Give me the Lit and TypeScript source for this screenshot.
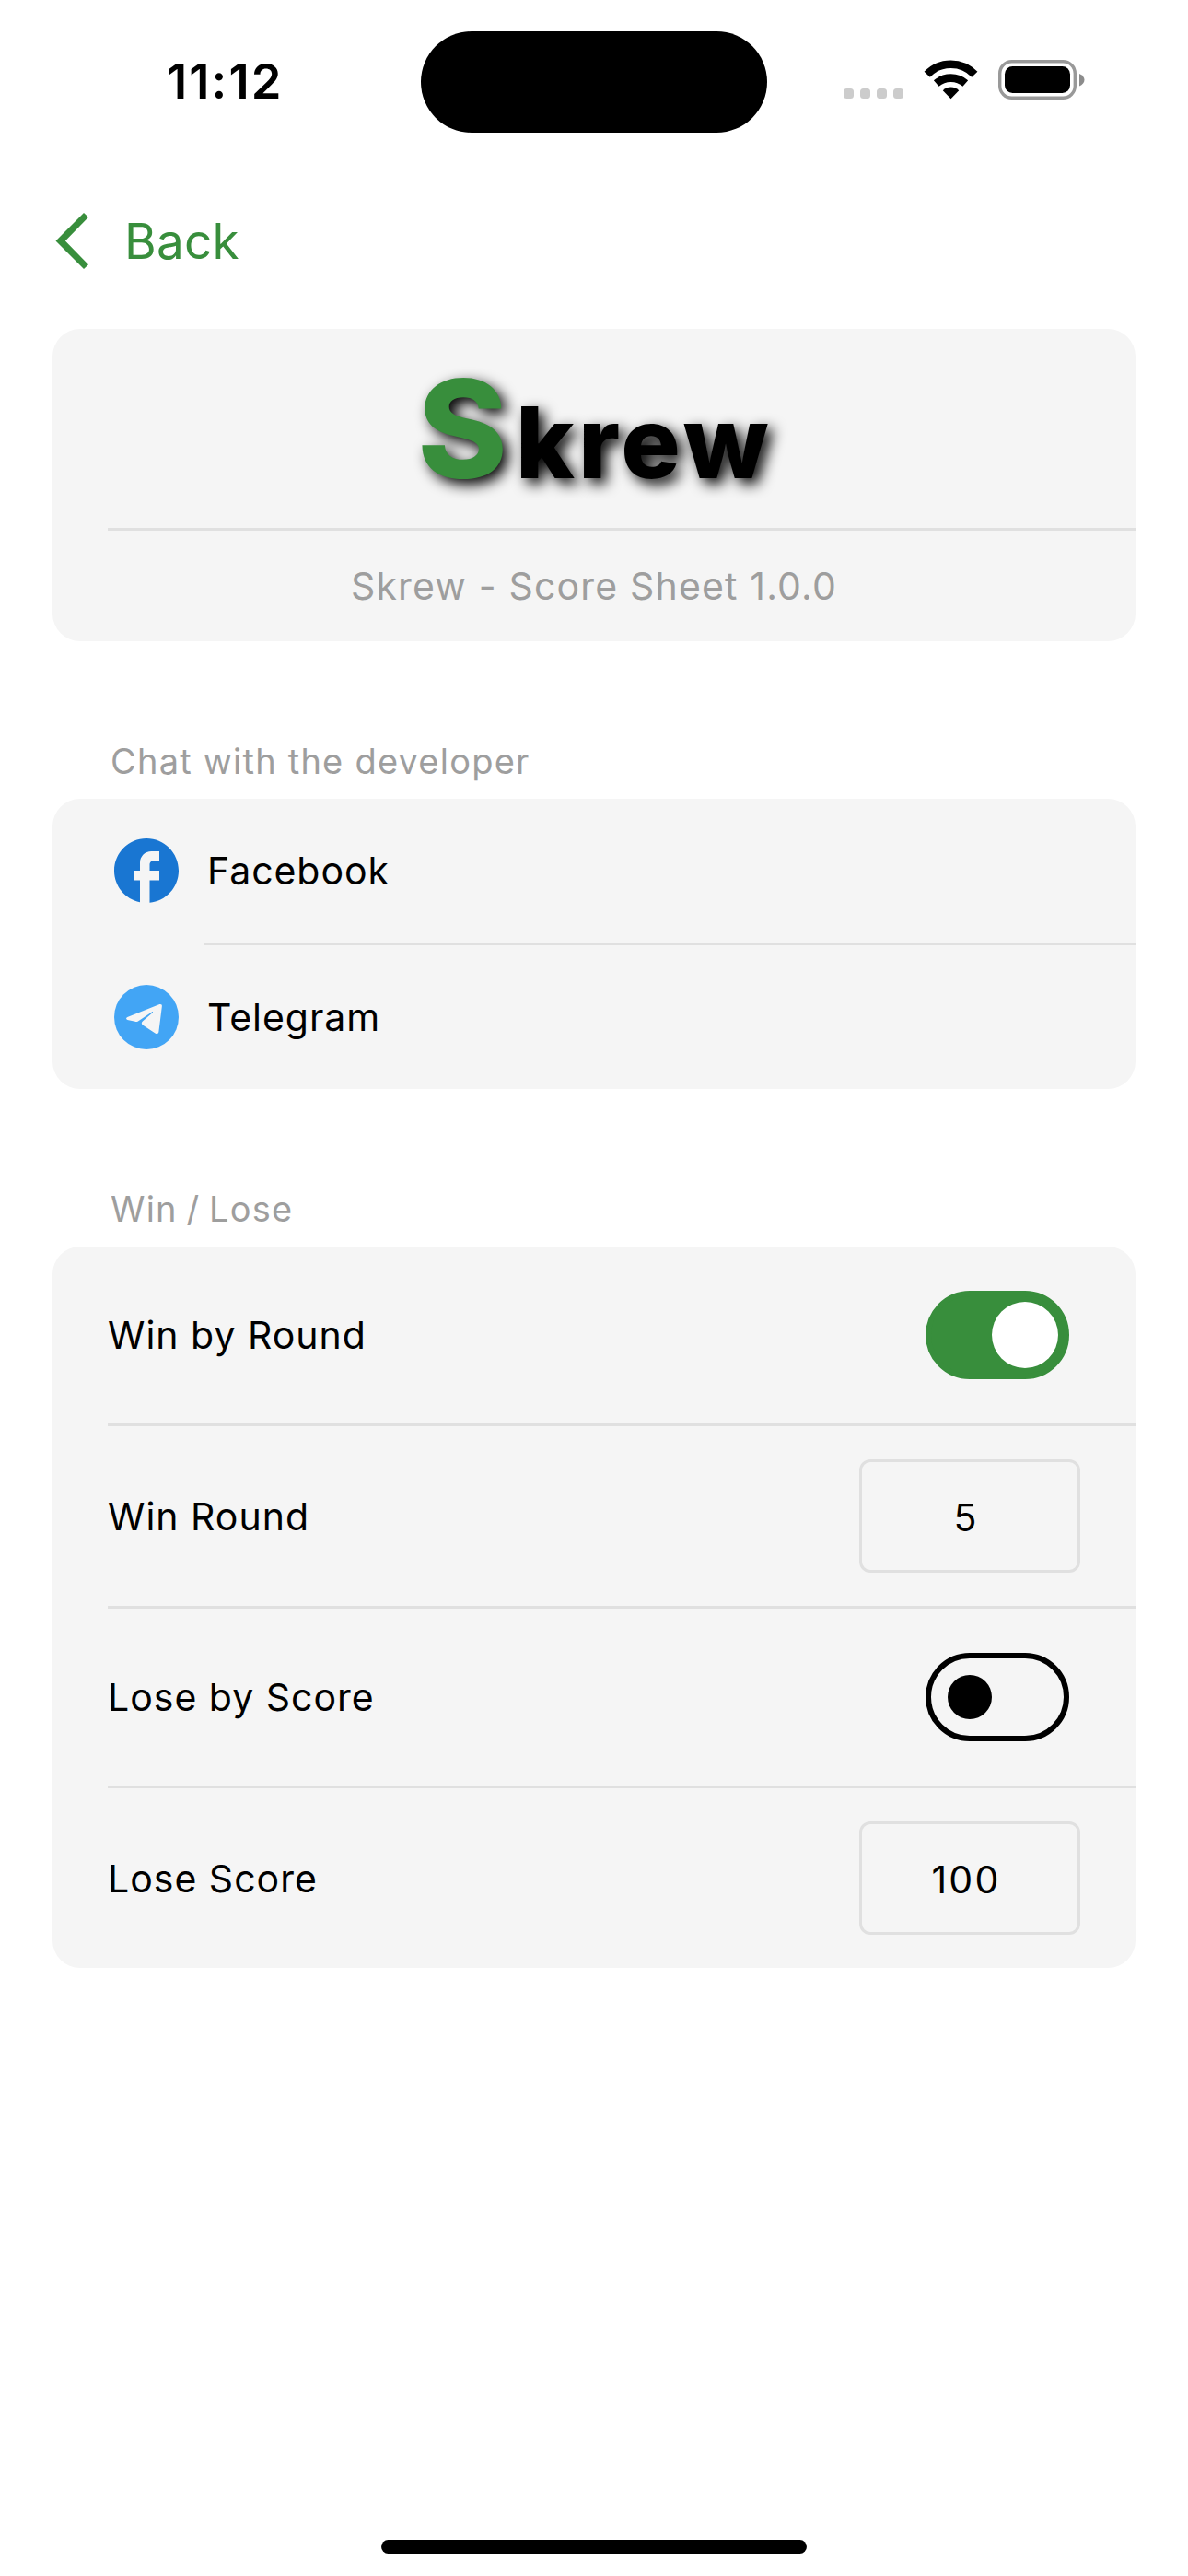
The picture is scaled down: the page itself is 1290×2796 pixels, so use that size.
import { LitElement, html, css, svg } from "lit";
import { customElement, property } from "lit/decorators.js";

@customElement("skrew-switch")
class SkrewSwitch extends LitElement {
  @property({ type: Boolean, reflect: true }) on = false;
  static styles = css`
    :host { display: block; }
    .track { box-sizing: border-box; width: 156px; height: 96px; border-radius: 48px; border: 6px solid #000; display: flex; align-items: center; padding: 0 18px; }
    .thumb { width: 48px; height: 48px; border-radius: 50%; background: #000; }
    .track.on { background: #388e3c; border-color: #388e3c; justify-content: flex-end; padding: 0 6px; }
    .track.on .thumb { width: 72px; height: 72px; background: #fff; }
  `;
  render() {
    return html`<div class="track ${this.on ? "on" : ""}"><div class="thumb"></div></div>`;
  }
}

const facebook = svg`<path fill="#1976d2" d="M22 12c0-5.52-4.48-10-10-10S2 6.48 2 12c0 4.84 3.44 8.87 8 9.8V15H8v-3h2V9.5C10 7.57 11.57 6 13.5 6H16v3h-2c-.55 0-1 .45-1 1v2h3v3h-3v6.95c5.05-.5 9-4.76 9-9.95z"/>`;
const telegram = svg`<circle cx="12" cy="12" r="10" fill="#42a5f5"/><path fill="#f5f5f5" d="M15.900 8.050c.6-.2 1 0 .92.6l-1 7.900c-.1.6-.6.8-1.100.450l-3.900-2.600c-.4-.3-.4-.7 0-1.100L13.950 10.600c.2-.3 0-.4-.3-.2L9.400 13.250c-.3.2-.6.2-.9.1L6.100 12.850c-.5-.2-.5-.6 0-.85z"/>`;

@customElement("app-root")
class AppRoot extends LitElement {
  static styles = css`
    :host { display: block; font-family: Inter, "Liberation Sans", sans-serif; color: #000; font-weight: 400; }
    .page { width: 1290px; height: 2796px; background: #fff; display: flex; flex-direction: column; box-sizing: border-box; overflow: hidden; }
    .status { height: 177px; flex: none; display: grid; grid-template-columns: 456px 378px 456px; box-sizing: border-box; padding-top: 33px; align-items: start; }
    .time { font-size: 52.5px; font-weight: 600; line-height: 60px; padding: 25px 0 0 181px; letter-spacing: 2.1px; }
    .island { height: 110px; margin: 0.5px 0.7px 0; border-radius: 56px; background: #000; }
    .sys { padding: 22px 0 0 81px; display: block; line-height: 0; }
    .nav { height: 180px; flex: none; box-sizing: border-box; padding: 0 0 0 60px; display: flex; align-items: flex-start; color: #388e3c; }
    .chev { margin-top: 53px; }
    .back { font-size: 53px; line-height: 64px; margin: 53px 0 0 38px; letter-spacing: 0.3px; }
    .card { margin: 0 57px; border-radius: 30px; background: #f5f5f5; flex: none; overflow: hidden; }
    .divider { height: 3px; background: #e0e0e0; margin-left: 60px; }
    .divider.deep { margin-left: 165px; }
    .logo { height: 216px; display: flex; justify-content: center; align-items: baseline; font-weight: 800; line-height: 218px; text-shadow: 6px 6px 15px #000; letter-spacing: 4.2px; padding-left: 2px; }
    .big { font-size: 148px; color: #388e3c; letter-spacing: 9px; }
    .rest { font-size: 107.5px; }
    .version { height: 120px; line-height: 120px; text-align: center; color: #9e9e9e; font-size: 41px; letter-spacing: 1.17px; }
    .caption { flex: none; height: 171px; box-sizing: border-box; padding: 108px 0 0 120px; font-size: 38px; line-height: 44px; color: #9e9e9e; letter-spacing: 1.22px; }
    .caption.tight { word-spacing: -2.2px; }
    .link { height: 156px; display: flex; align-items: center; padding-left: 60px; gap: 24px; font-size: 41px; letter-spacing: 0.95px; }
    .link svg { display: block; }
    .row { box-sizing: border-box; display: flex; align-items: center; justify-content: space-between; padding: 0 60px; font-size: 41px; letter-spacing: 1px; height: 192px; }
    .row.field { height: 195px; }
    .row skrew-switch { margin-right: 12px; }
    .input { box-sizing: border-box; width: 240px; height: 123px; border: 3px solid #e0e0e0; border-radius: 12px; text-align: center; line-height: 120px; padding-right: 8px; letter-spacing: 2.2px; }
    .home { width: 462px; height: 15px; border-radius: 8px; background: #000; margin: auto auto 24px; }
  `;
  render() {
    return html`
      <div class="page">
        <div class="status">
          <div class="time">11:12</div>
          <div class="island"></div>
          <div class="sys">
            <svg width="270" height="60" viewBox="0 0 270 60">
              <g fill="#ccc"><rect x="1" y="41" width="11" height="11" rx="3.5"/><rect x="19" y="41" width="11" height="11" rx="3.5"/><rect x="37" y="41" width="11" height="11" rx="3.5"/><rect x="55" y="41" width="11" height="11" rx="3.5"/></g>
              <g fill="none" stroke="#000" stroke-width="8.6">
                <path d="M91.700 25.800a35.500 35.500 0 0 1 51.600 0"/><path d="M101.700 35.600a24 24 0 0 1 31.600 0"/>
              </g>
              <path d="M117.500 52.200l-8.700-9a12 12 0 0 1 17.400 0z"/>
              <rect x="170.700" y="11.700" width="81.600" height="39.600" rx="13" fill="none" stroke="#999" stroke-width="3.4"/>
              <rect x="176" y="17" width="71" height="29" rx="8.500"/>
              <path fill="#8c8c8c" d="M257 25v13.500c3.500-1.500 5.500-4 5.500-6.750s-2-5.250-5.500-6.750z"/>
            </svg>
          </div>
        </div>
        <div class="nav">
          <svg class="chev" width="37" height="64" viewBox="0 0 37 64"><path d="M.5 31.500L31 1l5 4.800L10.900 31.500 36 57.200 31 62z" fill="#388e3c"/></svg>
          <div class="back">Back</div>
        </div>
        <div class="card">
          <div class="logo"><span class="big">S</span><span class="rest">krew</span></div>
          <div class="divider"></div>
          <div class="version">Skrew - Score Sheet 1.0.0</div>
        </div>
        <div class="caption">Chat with the developer</div>
        <div class="card">
          <div class="link"><svg width="84" height="84" viewBox="0 0 24 24">${facebook}</svg><span>Facebook</span></div>
          <div class="divider deep"></div>
          <div class="link"><svg width="84" height="84" viewBox="0 0 24 24">${telegram}</svg><span>Telegram</span></div>
        </div>
        <div class="caption tight">Win / Lose</div>
        <div class="card">
          <div class="row"><span>Win by Round</span><skrew-switch on></skrew-switch></div>
          <div class="divider"></div>
          <div class="row field"><span>Win Round</span><div class="input">5</div></div>
          <div class="divider"></div>
          <div class="row"><span>Lose by Score</span><skrew-switch></skrew-switch></div>
          <div class="divider"></div>
          <div class="row field"><span>Lose Score</span><div class="input">100</div></div>
        </div>
        <div class="home"></div>
      </div>`;
  }
}
